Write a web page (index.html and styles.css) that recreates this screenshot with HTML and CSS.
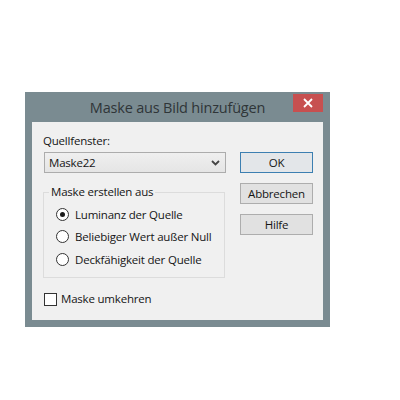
FILE: index.html
```html
<!DOCTYPE html>
<html lang="de">
<head>
<meta charset="utf-8">
<title>Maske aus Bild hinzufügen</title>
<link rel="stylesheet" href="styles.css">
</head>
<body>
<div class="window">
  <div class="titlebar">
    <span class="title">Maske aus Bild hinzufügen</span>
    <div class="close">
      <svg width="10" height="10" viewBox="0 0 10 10"><path d="M1 1L9 9M9 1L1 9" stroke="#fff" stroke-width="1.8"/></svg>
    </div>
  </div>
  <div class="client">
    <div class="left">
      <div class="label">Quellfenster:</div>
      <div class="combo">
        <span>Maske22</span>
        <svg class="chev" width="9" height="6" viewBox="0 0 9 6"><path d="M1 1L4.5 4.5L8 1" stroke="#444" stroke-width="1.8" fill="none"/></svg>
      </div>
      <fieldset class="group">
        <legend>Maske erstellen aus</legend>
        <div class="radios">
          <div class="row"><span class="radio checked"></span><span>Luminanz der Quelle</span></div>
          <div class="row"><span class="radio"></span><span>Beliebiger Wert außer Null</span></div>
          <div class="row"><span class="radio"></span><span>Deckfähigkeit der Quelle</span></div>
        </div>
      </fieldset>
      <div class="check-row"><span class="checkbox"></span><span>Maske umkehren</span></div>
    </div>
    <div class="right">
      <div class="btn default">OK</div>
      <div class="btn">Abbrechen</div>
      <div class="btn">Hilfe</div>
    </div>
  </div>
</div>
</body>
</html>
```
FILE: styles.css
```css
html, body {
  margin: 0;
  padding: 0;
  background: #ffffff;
}
body {
  font-family: "Open Sans", "Noto Sans", sans-serif;
  font-size: 11.5px;
  letter-spacing: -0.2px;
  color: #151515;
}
.window {
  margin: 92px 0 0 25px;
  width: 305px;
  height: 235px;
  box-sizing: border-box;
  background: #7a8b91;
  padding: 0 7px 7px 7px;
  display: flex;
  flex-direction: column;
}
.titlebar {
  height: 30px;
  position: relative;
  display: flex;
  align-items: center;
  justify-content: center;
}
.title {
  font-size: 14.5px;
  letter-spacing: -0.2px;
  color: #2f3538;
  line-height: 20px;
  margin-top: 1px;
}
.close {
  position: absolute;
  right: 0;
  top: 2px;
  width: 30px;
  height: 18px;
  background: #c75050;
  display: flex;
  align-items: center;
  justify-content: center;
}
.close svg { display: block; }
.client {
  flex: 1;
  background: #f0f0f0;
  display: flex;
  padding: 11px 0 0 11px;
  gap: 14px;
}
.left {
  width: 183px;
  display: flex;
  flex-direction: column;
}
.label {
  line-height: 16px;
  height: 16px;
  margin-bottom: 3px;
}
.combo {
  margin-left: 1px;
  width: 182px;
  height: 21px;
  box-sizing: border-box;
  border: 1px solid #acacac;
  background: linear-gradient(#efefef, #e5e5e5);
  display: flex;
  align-items: center;
  justify-content: space-between;
  padding: 0 5px 0 4px;
}
.chev { display: block; }
.group {
  margin: 11px 0 0 0;
  padding: 0;
  width: 182px;
  height: 94px;
  box-sizing: border-box;
  border: 1px solid #dcdcdc;
  min-width: 0;
}
.group legend {
  margin-left: 5px;
  padding: 0 2px;
  line-height: 16px;
}
.radios {
  padding: 3px 0 0 12px;
  display: flex;
  flex-direction: column;
}
.row {
  height: 22.5px;
  display: flex;
  align-items: center;
  gap: 6px;
}
.radio {
  width: 13px;
  height: 13px;
  box-sizing: border-box;
  border: 1px solid #333;
  border-radius: 50%;
  background: #fff;
  display: flex;
  align-items: center;
  justify-content: center;
}
.radio.checked::after {
  content: "";
  width: 5px;
  height: 5px;
  border-radius: 50%;
  background: #1a1a1a;
}
.check-row {
  margin: 13px 0 0 1px;
  display: flex;
  align-items: center;
  gap: 4px;
  line-height: 16px;
}
.checkbox {
  width: 13px;
  height: 13px;
  box-sizing: border-box;
  border: 1px solid #333;
  background: #fff;
}
.right {
  display: flex;
  flex-direction: column;
  gap: 10px;
  padding-top: 19px;
}
.btn {
  width: 73px;
  height: 21px;
  box-sizing: border-box;
  border: 1px solid #adadad;
  background: #e1e1e1;
  display: flex;
  align-items: center;
  justify-content: center;
}
.btn.default {
  border-color: #3c7fb1;
  background: #e3e6e9;
}
```
